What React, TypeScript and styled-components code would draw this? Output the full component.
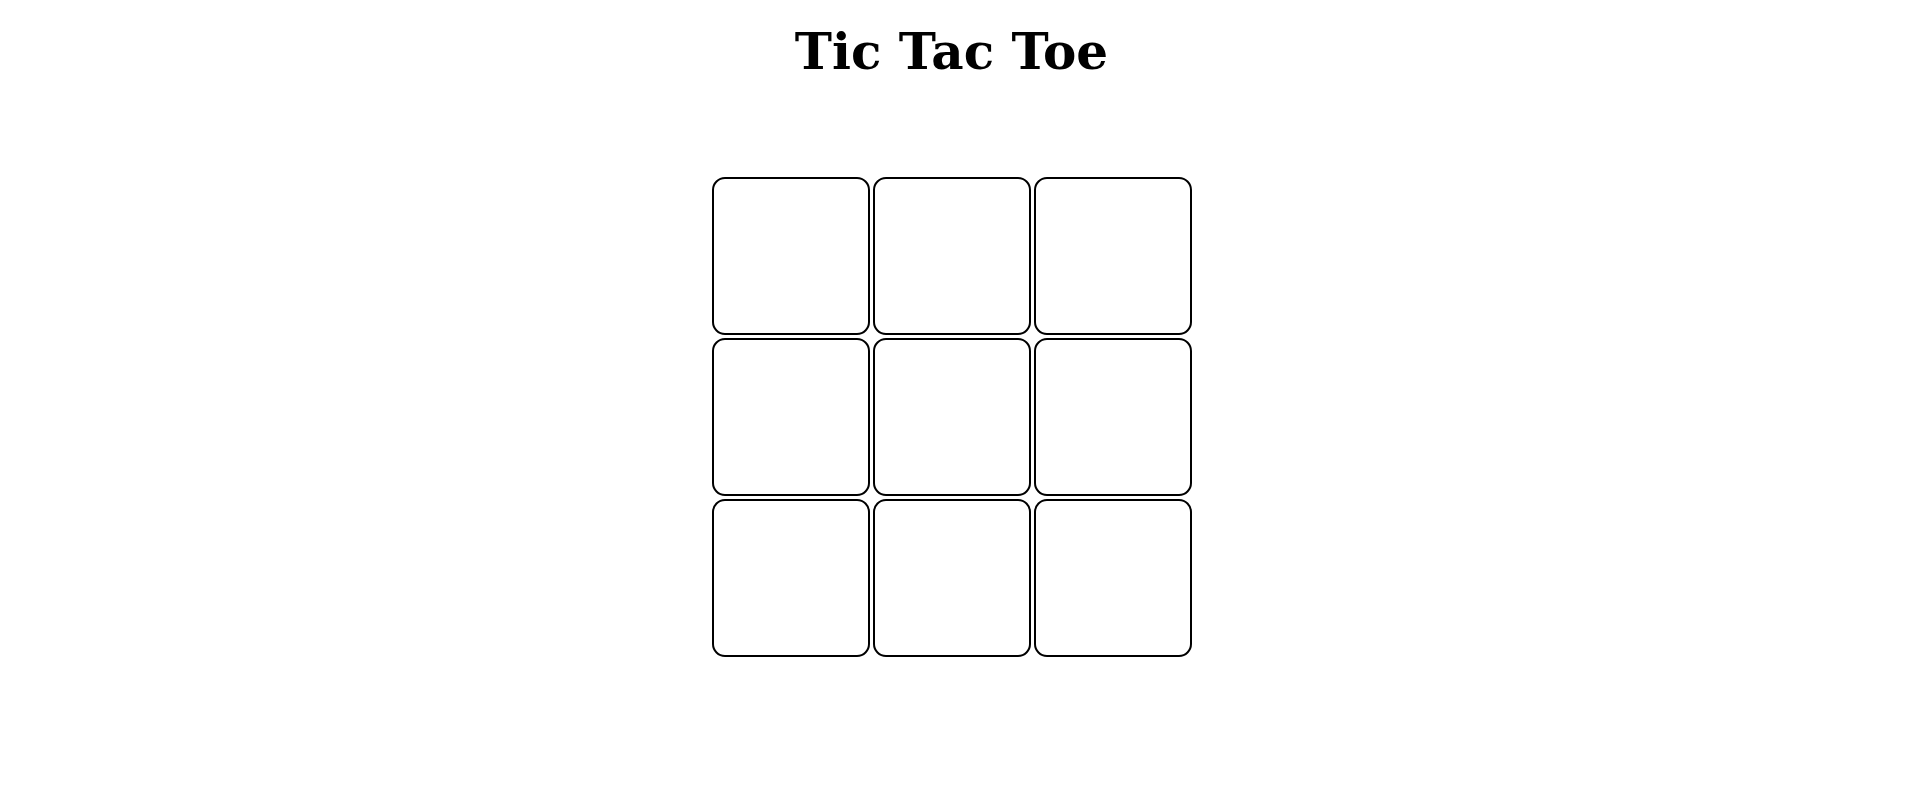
import React from 'react';
import styled, { createGlobalStyle } from 'styled-components';

const GlobalStyle = createGlobalStyle`
    html, body {
        margin: 0;
        background: #fff;
    }
    body {
        font-family: "DejaVu Serif", serif;
    }
    ::-webkit-scrollbar {
        width: 5px;
    }
    ::-webkit-scrollbar-track {
        background: #fff;
    }
    ::-webkit-scrollbar-thumb {
        background: #a3a3a3;
        border-radius: 0 0 2px 2px;
    }
`;

const Page = styled.div`
    display: flex;
    flex-direction: column;
    align-items: center;
    min-height: calc(100vh + 26px);
    padding: 24px 5px 0 0;
    box-sizing: border-box;
`;

const Title = styled.h1`
    margin: 0;
    font-family: "DejaVu Serif", serif;
    font-size: 50px;
    font-weight: bold;
    line-height: 56px;
    color: #000;
`;

const Board = styled.div`
    display: grid;
    grid-template-columns: repeat(3, 158px);
    grid-template-rows: repeat(3, 158px);
    gap: 3px;
    margin-top: 97px;
`;

const Cell = styled.button`
    margin: 0;
    padding: 0;
    width: 100%;
    height: 100%;
    box-sizing: border-box;
    border: 2px solid #000;
    border-radius: 13px;
    background: #fff;
    font-family: "DejaVu Serif", serif;
    font-size: 64px;
    cursor: pointer;
`;

const App = () => {
    const [ squares, setSquares ] = React.useState<(string | null)[]>(Array(9).fill(null));
    const [ xNext, setXNext ] = React.useState(true);

    const play = (index: number) => {
        if (squares[index]) return;
        const next = squares.slice();
        next[index] = xNext ? 'X' : 'O';
        setSquares(next);
        setXNext(!xNext);
    };

    return (
        <>
            <GlobalStyle/>
            <Page>
                <Title>Tic Tac Toe</Title>
                <Board>
                    { squares.map((value, index) => (
                        <Cell key={ index } onClick={ () => play(index) }>
                            { value }
                        </Cell>
                    )) }
                </Board>
            </Page>
        </>
    );
};

export default App;
